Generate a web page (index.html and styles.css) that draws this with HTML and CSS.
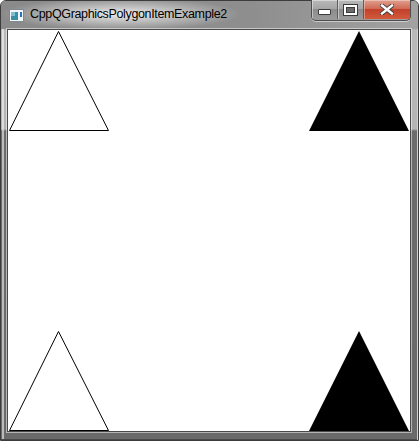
FILE: index.html
```html
<!DOCTYPE html>
<html>
<head>
<meta charset="utf-8">
<link rel="stylesheet" href="styles.css">
<title>CppQGraphicsPolygonItemExample2</title>
</head>
<body>
<div class="window">
  <div class="titlebar">
    <svg class="app-icon" width="15" height="13" viewBox="0 0 15 13">
      <rect x="0.5" y="0.5" width="14" height="12" fill="#f4f6f8" stroke="#7c8a96"/>
      <rect x="2" y="3" width="7" height="8" fill="#3a8fa8"/>
      <rect x="2" y="3" width="4" height="4" fill="#7ec0d0"/>
      <rect x="11" y="3" width="2" height="5" fill="#2a70c0"/>
    </svg>
    <span class="title">CppQGraphicsPolygonItemExample2</span>
    <div class="caption-buttons">
      <div class="cbtn min"><span class="min-glyph"></span></div>
      <div class="cbtn max"><span class="max-glyph"></span></div>
      <div class="cbtn close">
        <svg width="14" height="11" viewBox="0 0 14 11">
          <path d="M2 1.5 L12 9.5 M12 1.5 L2 9.5" stroke="#3a3a3a" stroke-width="4.2" stroke-linecap="square"/>
          <path d="M2 1.5 L12 9.5 M12 1.5 L2 9.5" stroke="#ffffff" stroke-width="2.4" stroke-linecap="square"/>
        </svg>
      </div>
    </div>
  </div>
  <div class="view">
    <svg class="scene" width="402" height="401" viewBox="0 0 402 401">
      <polygon points="1.5,100.5 50.5,1.5 100.5,100.5" fill="#ffffff" stroke="#000" stroke-width="1"/>
      <polygon points="301,101 351,1 401,101" fill="#000"/>
      <polygon points="1.5,400.5 50.5,301.5 100.5,400.5" fill="#ffffff" stroke="#000" stroke-width="1"/>
      <polygon points="301,401 351,301 401,401" fill="#000"/>
    </svg>
  </div>
</div>
</body>
</html>
```
FILE: styles.css
```css
html, body {
  margin: 0;
  padding: 0;
  background: #ffffff;
}

.window {
  width: 419px;
  height: 441px;
  box-sizing: border-box;
  border: 1px solid #3c3c3c;
  border-radius: 6px 6px 0 0;
  padding: 0 7px 8px 6px;
  display: flex;
  flex-direction: column;
  background:
    linear-gradient(to right, transparent 0, transparent 1px, rgba(255,255,255,0.55) 1px, rgba(255,255,255,0.55) 3px, transparent 3px),
    linear-gradient(to bottom, #9c9c9c 0, #a4a4a4 28px, #b9b9b9 29px, #b4b4b4 128px, #6c6c6c 130px, #6a6a6a 100%);
  box-shadow: inset -1px 0 0 #d0d0d0, inset 0 -1px 0 #4a4a4a;
}

.titlebar {
  height: 28px;
  flex: none;
  display: flex;
  align-items: flex-start;
  background:
    radial-gradient(ellipse 120px 16px at 120px 13px, rgba(240,240,240,0.95), rgba(240,240,240,0.0)),
    linear-gradient(to right, #8a8a8a 0, #8e8e8e 60%, #a2a2a2 100%);
  margin: 0 -7px 0 -6px;
  padding: 0 7px 0 6px;
  border-radius: 5px 5px 0 0;
}

.app-icon {
  margin: 8px 0 0 2px;
  flex: none;
}

.title {
  margin: 5px 0 0 6px;
  font-family: "Liberation Sans", Arial, sans-serif;
  font-size: 12.5px;
  line-height: 17px;
  color: #000;
  letter-spacing: -0.35px;
  white-space: nowrap;
}

.caption-buttons {
  margin-left: auto;
  margin-top: -1px;
  display: flex;
  height: 20px;
  border: 1px solid #4e4e4e;
  border-top: none;
  border-radius: 0 0 5px 5px;
  overflow: hidden;
  box-shadow: 0 1px 0 rgba(255,255,255,0.5);
}

.cbtn {
  height: 19px;
  display: flex;
  align-items: center;
  justify-content: center;
  box-sizing: border-box;
}

.min, .max {
  width: 26px;
  background: linear-gradient(to bottom, #b8b8b8 0, #a6a6a6 45%, #8c8c8c 50%, #9a9a9a 100%);
  border-right: 1px solid #5e5e5e;
  box-shadow: inset 1px 1px 0 rgba(255,255,255,0.45);
}

.min-glyph {
  width: 11px;
  height: 4px;
  margin-top: 5px;
  background: #fff;
  border: 1px solid #3c3c3c;
  border-radius: 1px;
}

.max-glyph {
  width: 9px;
  height: 6px;
  border: 2px solid #fff;
  outline: 1px solid #3c3c3c;
  background: #6c6c6c;
  box-shadow: inset 0 0 0 1px #3c3c3c;
}

.close {
  width: 46px;
  background: linear-gradient(to bottom, #e0a08f 0, #d06a56 45%, #c2412a 50%, #d25a3c 100%);
  box-shadow: inset 1px 1px 0 rgba(255,255,255,0.35);
}

.view {
  flex: 1;
  box-sizing: border-box;
  border: 1px solid #4a4a4a;
  background: #ffffff;
  box-shadow: 0 0 0 1px rgba(255,255,255,0.5);
  overflow: hidden;
}

.scene {
  display: block;
}
```
